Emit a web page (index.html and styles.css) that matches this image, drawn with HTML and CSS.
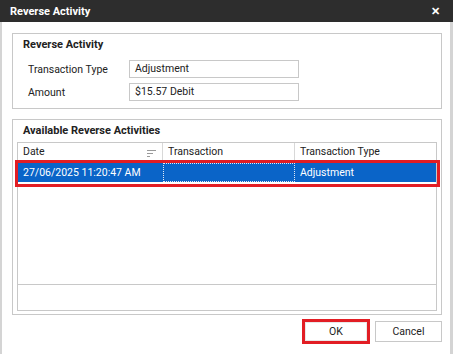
FILE: index.html
```html
<!DOCTYPE html>
<html lang="en">
<head>
  <meta charset="UTF-8" />
  <title>Reverse Activity</title>
  <link rel="stylesheet" href="styles.css">
</head>
<body>
  <div class="dialog">
    <div class="titlebar">
      <span class="title">Reverse Activity</span>
      <span class="close">&#x2715;</span>
    </div>

    <div class="content">
      <div class="group">
        <div class="group-title">Reverse Activity</div>
        <div class="field">
          <label>Transaction Type</label>
          <div class="input">Adjustment</div>
        </div>
        <div class="field">
          <label>Amount</label>
          <div class="input">$15.57 Debit</div>
        </div>
      </div>

      <div class="group group-grid">
        <div class="group-title">Available Reverse Activities</div>
        <div class="grid">
          <div class="grid-head">
            <div class="col col-date">Date
              <svg class="sort" width="9" height="8" viewBox="0 0 9 8">
                <path d="M0 1.5h9M0 4.5h6M0 7.5h3" stroke="#9a9a9a" stroke-width="1"/>
              </svg>
            </div>
            <div class="col col-trans">Transaction</div>
            <div class="col col-type">Transaction Type</div>
          </div>
          <div class="grid-body">
            <div class="row selected">
              <div class="col col-date">27/06/2025 11:20:47 AM</div>
              <div class="col col-trans focus"></div>
              <div class="col col-type">Adjustment</div>
            </div>
            <div class="mark mark-row"></div>
          </div>
          <div class="grid-foot"></div>
        </div>
      </div>

      <div class="actions">
        <div class="btn-wrap marked"><button class="btn">OK</button></div>
        <button class="btn">Cancel</button>
      </div>
    </div>
  </div>
</body>
</html>
```

FILE: styles.css
```css
body {
  margin: 0;
  width: 453px;
  height: 354px;
  overflow: hidden;
  background: #fff;
  font-family: "Segoe UI", Roboto, "Noto Sans", sans-serif;
  font-size: 10.5px;
  color: #222;
}
.dialog {
  height: 354px;
  border-left: 2px solid #d4d4d4;
  border-right: 3px solid #d4d4d4;
  box-sizing: border-box;
}
.titlebar {
  height: 22px;
  margin: 0 -3px 0 -2px;
  background: #2d2d2d;
  color: #fff;
  display: flex;
  align-items: center;
  justify-content: space-between;
  padding: 0 13px 0 10px;
}
.title {
  font-weight: bold;
  font-size: 11px;
}
.close {
  font-size: 11px;
  font-weight: bold;
}
.content {
  padding: 11px 8px 0 10px;
}
.group {
  border: 1px solid #c8c8c8;
  padding: 0 4px 7px 4px;
}
.group-title {
  font-weight: bold;
  font-size: 11px;
  color: #222;
  padding-left: 6px;
  line-height: 21px;
  height: 21px;
}
.field {
  display: flex;
  align-items: center;
  padding-left: 11px;
  margin-top: 5px;
}
.field + .field {
  margin-top: 5px;
}
.field label {
  width: 101px;
}
.input {
  width: 163px;
  height: 16px;
  border: 1px solid #c8c8c8;
  padding-left: 5px;
  line-height: 16px;
}
.group-grid {
  margin-top: 10px;
  padding: 0 4px 3px 4px;
}
.group-grid .group-title {
  height: 22px;
  line-height: 22px;
}
.grid {
  border: 1px solid #c8c8c8;
}
.grid-head,
.row {
  display: flex;
}
.grid-head {
  height: 18px;
  border-bottom: 1px solid #d8d8d8;
}
.grid-head .col {
  border-right: 1px solid #d8d8d8;
  line-height: 18px;
}
.grid-head .col:last-child {
  border-right: none;
}
.col {
  padding-left: 5px;
  box-sizing: border-box;
  position: relative;
}
.col-date { width: 145px; }
.col-trans { width: 132px; }
.col-type { flex: 1; }
.sort {
  position: absolute;
  right: 6px;
  top: 6px;
}
.grid-body {
  height: 121px;
  position: relative;
  border-bottom: 1px solid #c8c8c8;
  padding-top: 1px;
}
.row.selected {
  height: 19px;
  background: #0a64c8;
  color: #fff;
  line-height: 19px;
}
.focus {
  border: 1px dotted #e0e8f4;
}
.mark {
  position: absolute;
  border: 3px solid #e21d24;
}
.mark-row {
  left: -3px;
  right: -4px;
  top: -2px;
  height: 21px;
}
.grid-foot {
  height: 25px;
}
.actions {
  display: flex;
  justify-content: flex-end;
  align-items: center;
  gap: 5px;
  margin-top: 4px;
}
.btn {
  font-family: "Segoe UI", Roboto, "Noto Sans", sans-serif;
  font-size: 10.5px;
  color: #222;
  background: #fff;
  border: 1px solid #c8c8c8;
  width: 67px;
  height: 21px;
  padding: 0;
}
.marked {
  border: 3px solid #e21d24;
  width: 62px;
  height: 19px;
  display: flex;
  align-items: center;
  justify-content: center;
}
.marked .btn {
  width: 62px;
  height: 19px;
  border-color: #e8e8e8;
}
```
